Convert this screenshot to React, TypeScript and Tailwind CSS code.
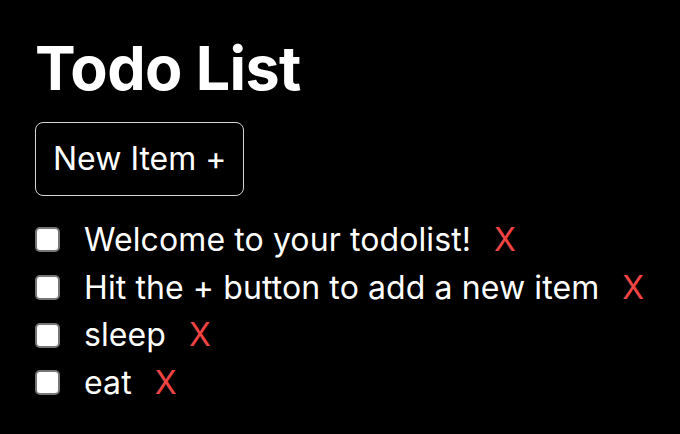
import { useState } from 'react';

const initialItems = [
  'Welcome to your todolist!',
  'Hit the + button to add a new item',
  'sleep',
  'eat',
];

export default function App() {
  const [items, setItems] = useState<string[]>(initialItems);

  return (
    <div className="min-h-[434px] bg-black text-white px-[35px] pt-[30px] font-['Inter',sans-serif]">
      <h1 className="text-[61px] font-bold leading-[76px] tracking-[-0.6px]">Todo List</h1>
      <button
        onClick={() => setItems([...items, 'new item'])}
        className="mt-[16px] h-[74px] px-[17px] border-[1.5px] border-[#d4d4d4] rounded-[8px] text-[32px] text-white"
      >
        New Item +
      </button>
      <ul className="mt-[20px]">
        {items.map((item, index) => (
          <li key={index} className="flex items-center h-[47.7px] whitespace-nowrap">
            <input
              type="checkbox"
              className="shrink-0 appearance-none w-[25px] h-[25px] bg-white border-2 border-[#767676] rounded-[5px]"
            />
            <span className="ml-[24px] text-[32px] tracking-[0.1px] leading-[48px]">{item}</span>
            <button
              onClick={() => setItems(items.filter((_, i) => i !== index))}
              className="ml-[23px] text-[32px] leading-[48px] text-[#ef4444]"
            >
              X
            </button>
          </li>
        ))}
      </ul>
    </div>
  );
}
